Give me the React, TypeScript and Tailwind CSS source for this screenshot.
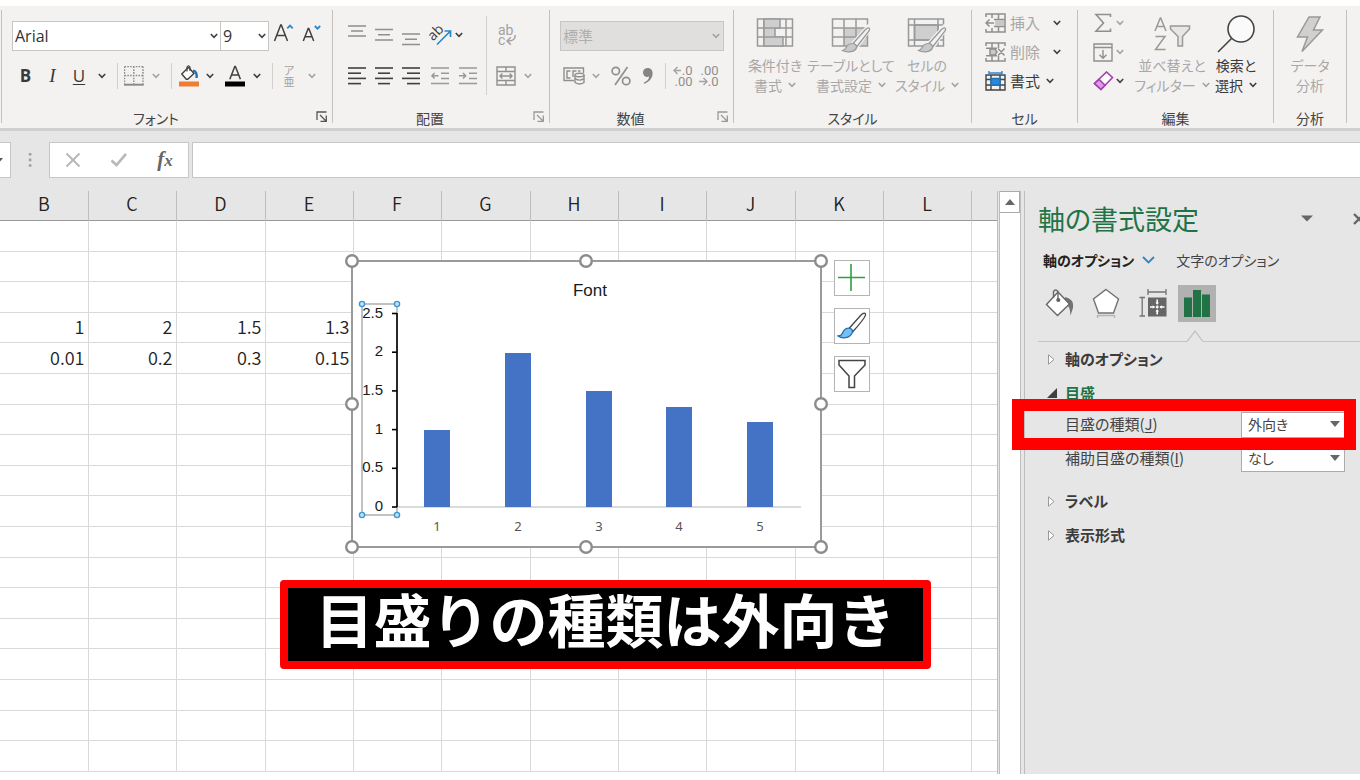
import type { ReactNode } from 'react';

const GRAY = '#a3a3a3';
const DARK = '#404040';

function Chevron({ color = DARK }: { color?: string }) {
  return (
    <svg width="8" height="6" viewBox="0 0 8 6" fill="none" stroke={color} strokeWidth="1.6">
      <path d="M0.8 1 L4 4.4 L7.2 1" />
    </svg>
  );
}

function Tool({ label, w, children }: { label: string; w: string; children: ReactNode }) {
  return (
    <button type="button" aria-label={label} className={`flex h-[30px] shrink-0 items-center justify-center ${w}`}>
      {children}
    </button>
  );
}

function Sep({ w = 'w-[10px]' }: { w?: string }) {
  return (
    <div className={`flex h-[26px] shrink-0 justify-center ${w}`}>
      <div className="w-px bg-[#d2d0ce]" />
    </div>
  );
}

function Launcher({ color }: { color: string }) {
  return (
    <button type="button" aria-label="詳細" className="absolute right-[4px] bottom-0">
      <svg width="12" height="12" viewBox="0 0 12 12" fill="none" stroke={color} strokeWidth="1.3">
        <path d="M1 9 V1 H10.5 M4 4 L9.5 9.5 M10.3 4.5 V10.3 H4.5" />
      </svg>
    </button>
  );
}

function Group({
  name,
  w,
  launcher,
  children,
}: {
  name: string;
  w: string;
  launcher?: string;
  children: ReactNode;
}) {
  return (
    <section
      aria-label={name}
      className={`relative flex h-[113px] shrink-0 flex-col justify-between border-r border-[#c4c2c0] ${w}`}
    >
      {children}
      <h2 className={`text-center text-sm leading-[10px] text-[#444] ${launcher ? 'pr-[22px]' : ''}`}>{name}</h2>
      {launcher && <Launcher color={launcher} />}
    </section>
  );
}

function Lines({ spans, color = DARK }: { spans: [number, number][]; color?: string }) {
  return (
    <svg width="18" height="18" viewBox="0 0 18 18" stroke={color} strokeWidth="1.6">
      {spans.map(([a, b], i) => (
        <path key={i} d={`M${a} ${1 + i * 5.2} H${b}`} />
      ))}
    </svg>
  );
}

function Brush({ x, y }: { x: number; y: number }) {
  return (
    <g transform={`translate(${x} ${y})`}>
      <path d="M26 0 L27.5 2 L14 21 L10 17.5 Z" fill="#f3f2f1" stroke="#f3f2f1" strokeWidth="4" />
      <path
        d="M26.5 0.8 C28 1.2 27.8 2.6 27 4 L15 19.5 L11 16.5 L23.5 2.5 C24.5 1.5 25.5 0.6 26.5 0.8 Z"
        fill="#f3f2f1"
        stroke="#999"
        strokeWidth="1.3"
      />
      <path
        d="M10.5 16.5 C13 16.5 15 18.5 14.5 20.5 C13.5 25 5 26 0.5 23.5 C4 22.5 3.5 21 5 18.8 C6.4 17 8.5 16.4 10.5 16.5 Z"
        fill="#c8c8c8"
        stroke="#999"
        strokeWidth="1.2"
      />
    </g>
  );
}

function Big({
  icon,
  top,
  bottom,
  w,
  dark,
  caret = true,
}: {
  icon: ReactNode;
  top: string;
  bottom: string;
  w: string;
  dark?: boolean;
  caret?: boolean;
}) {
  return (
    <button
      type="button"
      className={`flex shrink-0 flex-col items-center text-sm leading-5 whitespace-nowrap ${w} ${dark ? 'text-[#3b3a39]' : 'text-[#a8a8a8]'}`}
    >
      <span className="flex h-[42px] items-center justify-center">{icon}</span>
      <span>{top}</span>
      <span className="flex items-center gap-1.5">
        {bottom}
        {caret && <Chevron color={dark ? DARK : GRAY} />}
      </span>
    </button>
  );
}

function FontGroup() {
  return (
    <Group name="フォント" w="w-[331px]" launcher="#555">
      <div className="pt-[11px] pl-[10px]">
        <div className="flex h-[30px]">
          <div className="relative w-[209px]">
            <select
              aria-label="フォント名"
              className="h-[30px] w-full appearance-none border border-[#c8c6c4] bg-white pl-[2px] font-['Open_Sans'] text-base text-[#333] outline-none"
            >
              <option>Arial</option>
            </select>
            <span className="pointer-events-none absolute top-[12px] right-[3px]">
              <Chevron />
            </span>
          </div>
          <div className="relative -ml-px w-[49px]">
            <select
              aria-label="フォント サイズ"
              className="h-[30px] w-full appearance-none border border-[#c8c6c4] bg-white pl-[2px] font-['Open_Sans'] text-base text-[#333] outline-none"
            >
              <option>9</option>
            </select>
            <span className="pointer-events-none absolute top-[12px] right-[3px]">
              <Chevron />
            </span>
          </div>
          <button type="button" aria-label="フォント サイズの拡大" className="ml-[4px] h-[22px] w-[22px]">
            <svg width="22" height="22" viewBox="0 0 22 22" fill="none">
              <path d="M1.5 20 L7.7 4 H8.3 L14.5 20 M4 14.5 H12" stroke={DARK} strokeWidth="1.5" />
              <path d="M14.3 7.3 L17 4.6 L19.7 7.3" stroke="#2b88c8" strokeWidth="1.8" />
            </svg>
          </button>
          <button type="button" aria-label="フォント サイズの縮小" className="ml-[7px] h-[22px] w-[20px]">
            <svg width="20" height="22" viewBox="0 0 20 22" fill="none">
              <path d="M1.3 20 L6.2 7.5 H6.8 L11.7 20 M3.2 15.7 H9.8" stroke={DARK} strokeWidth="1.5" />
              <path d="M12.8 5 L15.5 7.7 L18.2 5" stroke="#2b88c8" strokeWidth="1.8" />
            </svg>
          </button>
        </div>
        <div className="mt-[10px] flex items-center font-['Open_Sans'] text-[17px] leading-5 text-[#3b3a39]">
          <Tool label="太字" w="w-[27px]">
            <b>B</b>
          </Tool>
          <Tool label="斜体" w="w-[27px]">
            <i className="font-['Liberation_Serif'] text-[19px]">I</i>
          </Tool>
          <Tool label="下線" w="w-[26px]">
            <u className="underline-offset-2">U</u>
          </Tool>
          <Tool label="下線の種類" w="w-[20px]">
            <Chevron />
          </Tool>
          <Sep />
          <Tool label="罫線" w="w-[24px]">
            <svg width="20" height="20" viewBox="0 0 20 20" fill="none" stroke="#8c8c8c">
              <path d="M0.5 0.5 H19 M0.5 0.5 V19 M19 0.5 V19 M0.5 9.5 H19 M9.8 0.5 V19" strokeWidth="1.4" strokeDasharray="1.6 1.2" />
              <path d="M0 18.7 H19.6" strokeWidth="2" />
            </svg>
          </Tool>
          <Tool label="罫線の種類" w="w-[20px]">
            <Chevron color={GRAY} />
          </Tool>
          <Sep />
          <Tool label="塗りつぶしの色" w="w-[25px]">
            <svg width="22" height="22" viewBox="0 0 22 22" fill="none">
              <path d="M3.8 9 L10.5 2.3 L16 8.5 L9.7 14.3 H8.3 Z" fill="#fff" stroke={DARK} strokeWidth="1.4" />
              <path d="M9 6.5 V2 Q10.5 -0.5 12 2 V6" stroke={DARK} strokeWidth="1.2" />
              <path d="M15 5.8 Q19.3 6 18.6 13" stroke="#1e74b8" strokeWidth="2.4" />
              <rect x="1" y="16.5" width="20" height="5" fill="#ed7d31" />
            </svg>
          </Tool>
          <Tool label="塗りつぶしの色の一覧" w="w-[18px]">
            <Chevron />
          </Tool>
          <Tool label="フォントの色" w="w-[32px]">
            <svg width="20" height="22" viewBox="0 0 20 22" fill="none">
              <path d="M4.8 14.3 L9.8 1.5 H10.4 L15.4 14.3 M6.7 10 H13.5" stroke={DARK} strokeWidth="1.5" />
              <rect y="16.5" width="20" height="5" fill="#000" />
            </svg>
          </Tool>
          <Tool label="フォントの色の一覧" w="w-[12px]">
            <Chevron />
          </Tool>
          <Sep w="w-[18px]" />
          <Tool label="ふりがな" w="w-[16px]">
            <span className="flex flex-col font-['Noto_Sans_CJK_JP'] text-[11px] leading-[11px] text-[#a3a3a3]">
              <span>ア</span>
              <span>亜</span>
            </span>
          </Tool>
          <Tool label="ふりがなの設定" w="w-[30px]">
            <Chevron color={GRAY} />
          </Tool>
        </div>
      </div>
    </Group>
  );
}

function AlignGroup() {
  return (
    <Group name="配置" w="w-[217px]" launcher="#999">
      <div className="flex pl-[10px]">
        <div className="w-[140px] pt-[10px]">
          <div className="flex h-[30px] items-center">
            <Tool label="上揃え" w="w-[27px]">
              <svg width="18" height="24" viewBox="0 0 18 24" stroke="#8f8f8f" strokeWidth="1.5">
                <path d="M0 3 H18 M3 8 H15 M0 13 H18" />
              </svg>
            </Tool>
            <Tool label="上下中央揃え" w="w-[27px]">
              <svg width="18" height="24" viewBox="0 0 18 24" stroke="#8f8f8f" strokeWidth="1.5">
                <path d="M0 6.5 H18 M3 11.7 H15 M0 17 H18" />
              </svg>
            </Tool>
            <Tool label="下揃え" w="w-[28px]">
              <svg width="18" height="24" viewBox="0 0 18 24" stroke="#8f8f8f" strokeWidth="1.5">
                <path d="M0 11 H18 M3 16.2 H15 M0 21.5 H18" />
              </svg>
            </Tool>
            <Tool label="方向" w="w-[30px]">
              <svg className="overflow-visible" width="24" height="24" viewBox="0 0 24 24" fill="none">
                <text
                  x="8"
                  y="14"
                  textAnchor="middle"
                  transform="rotate(-45 8 10)"
                  fontSize="14"
                  fontFamily="Open Sans"
                  fill={DARK}
                >
                  ab
                </text>
                <path d="M9 21.5 L22 8.5 M16.5 8 H22.5 V14" stroke="#2b88c8" strokeWidth="1.7" />
              </svg>
            </Tool>
            <Tool label="方向の一覧" w="w-[8px]">
              <Chevron />
            </Tool>
          </div>
          <div className="mt-[11px] flex h-[30px] items-center">
            <Tool label="左揃え" w="w-[27px]">
              <Lines spans={[[0, 18], [0, 13], [0, 18], [0, 13]]} />
            </Tool>
            <Tool label="中央揃え" w="w-[27px]">
              <Lines spans={[[0, 18], [3, 15], [0, 18], [3, 15]]} />
            </Tool>
            <Tool label="右揃え" w="w-[28px]">
              <Lines spans={[[0, 18], [5, 18], [0, 18], [5, 18]]} />
            </Tool>
            <Tool label="インデントを減らす" w="w-[30px]">
              <svg width="18" height="18" viewBox="0 0 18 18" stroke="#999" strokeWidth="1.5" fill="none">
                <path d="M0 1 H18 M10 6.2 H18 M10 11.4 H18 M0 16.6 H18 M7.5 8.8 H1 M3.6 6 L0.9 8.8 L3.6 11.6" />
              </svg>
            </Tool>
            <Tool label="インデントを増やす" w="w-[26px]">
              <svg width="18" height="18" viewBox="0 0 18 18" stroke="#999" strokeWidth="1.5" fill="none">
                <path d="M0 1 H18 M10 6.2 H18 M10 11.4 H18 M0 16.6 H18 M0 8.8 H6.5 M4 6 L6.7 8.8 L4 11.6" />
              </svg>
            </Tool>
          </div>
        </div>
        <div className="mt-[6px] ml-[3px] h-[79px] w-px bg-[#d2d0ce]" />
        <div className="pt-[10px] pl-[6px]">
          <Tool label="折り返して全体を表示する" w="w-[28px]">
            <svg className="overflow-visible" width="20" height="24" viewBox="0 0 20 24" fill="none">
              <text x="1" y="12" fontSize="14" fontFamily="Roboto" fill={GRAY}>
                ab
              </text>
              <text x="1" y="22" fontSize="14" fontFamily="Roboto" fill={GRAY}>
                c
              </text>
              <path d="M18 12 Q19 18 10.5 18 M13.8 14.3 L10 18 L13.8 21.6" stroke={GRAY} strokeWidth="1.5" />
            </svg>
          </Tool>
          <div className="mt-[11px] flex">
            <Tool label="セルを結合して中央揃え" w="w-[25px]">
              <svg width="20" height="20" viewBox="0 0 20 20" fill="none" stroke="#909090" strokeWidth="1.4">
                <path d="M1 1 H19 V19 H1 Z M1 5.5 H19 M1 14.5 H19 M10 1 V5.5 M10 14.5 V19 M4 10 H16 M6.4 7.6 L4 10 L6.4 12.4 M13.6 7.6 L16 10 L13.6 12.4" />
              </svg>
            </Tool>
            <Tool label="結合の種類" w="w-[20px]">
              <Chevron color={GRAY} />
            </Tool>
          </div>
        </div>
      </div>
    </Group>
  );
}

function NumberGroup() {
  return (
    <Group name="数値" w="w-[184px]" launcher="#999">
      <div className="pt-[11px] pl-[10px]">
        <div className="relative w-[164px]">
          <select
            aria-label="数値の書式"
            disabled
            className="h-[30px] w-full appearance-none border border-[#c8c6c4] bg-[#e1dfdd] pl-[2px] text-[15px] text-[#b0aeac] opacity-100"
          >
            <option>標準</option>
          </select>
          <span className="pointer-events-none absolute top-[12px] right-[4px]">
            <Chevron color={GRAY} />
          </span>
        </div>
        <div className="mt-[10px] flex items-center">
          <Tool label="通貨表示形式" w="w-[28px]">
            <svg width="22" height="20" viewBox="0 0 22 20" fill="none" stroke="#8f8f8f" strokeWidth="1.4">
              <path d="M11 14.5 H1 V2 H20.5 V7 M7.5 5 H4 V12 H7.5 M13.5 5 H10 V11 M15 5 H17.5" />
              <path d="M12 9 V16.5 Q16.5 19.5 21 16.5 V9" fill="#f3f2f1" />
              <ellipse cx="16.5" cy="9" rx="4.5" ry="1.8" fill="#f3f2f1" />
              <path d="M12 12.7 Q16.5 15.5 21 12.7" />
            </svg>
          </Tool>
          <Tool label="通貨の一覧" w="w-[16px]">
            <Chevron color={GRAY} />
          </Tool>
          <Tool label="パーセント スタイル" w="w-[33px]">
            <svg width="20" height="20" viewBox="0 0 20 20" fill="none" stroke="#8f8f8f" strokeWidth="1.7">
              <circle cx="4.8" cy="5" r="3.7" />
              <circle cx="15.2" cy="15" r="3.7" />
              <path d="M16.5 1 L4 19" />
            </svg>
          </Tool>
          <Tool label="桁区切りスタイル" w="w-[22px]">
            <svg width="12" height="18" viewBox="0 0 12 18" fill="#858585">
              <path d="M5.2 1 C8.6 0.8 10.6 3 10.6 6.5 C10.6 11.5 6.5 15.5 2 16.8 L1.7 15.8 C4.8 14.6 7 12.4 7.2 9.6 C3.8 11 1 8.6 1 5.4 C1 2.9 2.9 1.1 5.2 1 Z" />
            </svg>
          </Tool>
          <Sep w="w-[12px]" />
          <Tool label="小数点以下の表示桁数を増やす" w="w-[24px]">
            <svg className="overflow-visible" width="22" height="22" viewBox="0 0 22 22" fill="none">
              <path d="M9 5.5 H2 M5.5 2 L2 5.5 L5.5 9" stroke={GRAY} strokeWidth="1.4" />
              <text x="20.5" y="10" textAnchor="end" fontSize="13" fontFamily="Roboto" fill="#8f8f8f">
                .0
              </text>
              <text x="20.5" y="21" textAnchor="end" fontSize="13" fontFamily="Roboto" fill="#8f8f8f">
                .00
              </text>
            </svg>
          </Tool>
          <Tool label="小数点以下の表示桁数を減らす" w="w-[28px]">
            <svg className="overflow-visible" width="22" height="22" viewBox="0 0 22 22" fill="none">
              <text x="20.5" y="10" textAnchor="end" fontSize="13" fontFamily="Roboto" fill="#8f8f8f">
                .00
              </text>
              <path d="M1 16.5 H9 M5.5 13 L9 16.5 L5.5 20" stroke={GRAY} strokeWidth="1.4" />
              <text x="20.5" y="21" textAnchor="end" fontSize="13" fontFamily="Roboto" fill="#8f8f8f">
                .0
              </text>
            </svg>
          </Tool>
        </div>
      </div>
    </Group>
  );
}

function StyleGroup() {
  return (
    <Group name="スタイル" w="w-[238px]">
      <div className="flex pt-[3px] pl-[3px]">
        <Big
          w="w-[76px]"
          top="条件付き"
          bottom="書式"
          icon={
            <svg width="38" height="36" viewBox="0 0 38 36" fill="none" stroke="#999" strokeWidth="1.5">
              <path d="M1.5 3 H36.5 V30 H1.5 Z M1.5 12 H36.5 M1.5 21 H36.5 M8 3 V30 M30 3 V30" />
              <path d="M8 3 H24 V12 H8 Z M8 12 H19 V21 H8 Z M8 21 H27 V30 H8 Z" fill="#cfcfcf" />
            </svg>
          }
        />
        <Big
          w="w-[76px]"
          top="テーブルとして"
          bottom="書式設定"
          icon={
            <svg width="40" height="38" viewBox="0 0 40 38" fill="none" stroke="#999" strokeWidth="1.5">
              <path d="M13 13 H36 V31 H13 Z" fill="#cfcfcf" stroke="none" />
              <path d="M1.5 4 H36.5 V31 H1.5 Z M1.5 13 H36.5 M1.5 22 H36.5 M13 4 V31 M25 4 V31" />
              <Brush x={11} y={12} />
            </svg>
          }
        />
        <Big
          w="w-[76px]"
          top="セルの"
          bottom="スタイル"
          icon={
            <svg width="40" height="38" viewBox="0 0 40 38" fill="none" stroke="#999" strokeWidth="1.5">
              <path d="M7.5 10 H31 V25 H7.5 Z" fill="#cfcfcf" />
              <path d="M1.5 4 H36.5 V31 H1.5 Z M1.5 10 H36.5 M1.5 25 H36.5 M7.5 4 V31 M31 4 V31" />
              <Brush x={11} y={12} />
            </svg>
          }
        />
      </div>
    </Group>
  );
}

function CellRow({ icon, text, dark }: { icon: ReactNode; text: string; dark?: boolean }) {
  return (
    <button
      type="button"
      className={`flex h-[29px] items-center gap-[4px] pb-[3px] text-[15px] ${dark ? 'text-[#3b3a39]' : 'text-[#a8a8a8]'}`}
    >
      {icon}
      <span className={dark ? 'mr-[2px]' : 'mr-[9px]'}>{text}</span>
      <Chevron />
    </button>
  );
}

function CellGroup() {
  return (
    <Group name="セル" w="w-[106px]">
      <div className="flex flex-col items-start pl-[13px]">
        <CellRow
          text="挿入"
          icon={
            <svg width="21" height="20" viewBox="0 0 21 20" fill="none" stroke="#8f8f8f" strokeWidth="1.5">
              <path d="M1 4 V1 H20 V19 H1 V16 M7 1 V5 M13.5 1 V19 M7 15 V19 M9 6.5 H20 M9 13.5 H20 M1 10 H9 M4.5 6.5 L1 10 L4.5 13.5" />
              <path d="M10 7 H19 V13 H10 Z" fill="#c8c8c8" stroke="none" />
            </svg>
          }
        />
        <CellRow
          text="削除"
          icon={
            <svg width="21" height="20" viewBox="0 0 21 20" fill="none" stroke="#8f8f8f" strokeWidth="1.5">
              <path d="M1 4 V1 H20 V4 M1 16 V19 H20 V16 M7 1 V6 M13.5 1 V6 M7 14 V19 M13.5 14 V19 M1 6.3 H12 M1 13.7 H12 M13 6.5 L19.5 13.5 M19.5 6.5 L13 13.5" />
              <path d="M5 7 H10 L12 10 L10 13 H5 Z" fill="#c8c8c8" />
            </svg>
          }
        />
        <CellRow
          dark
          text="書式"
          icon={
            <svg width="21" height="20" viewBox="0 0 21 20" fill="none" stroke="#444" strokeWidth="1.4">
              <path d="M1 4 H20 V19 H1 Z M1 8.5 H20 M1 14 H20 M6 4 V19 M15 4 V19" />
              <path d="M6 7.5 H15 V14 H6 Z" fill="#2b88d8" stroke="#1e74b8" />
              <path d="M4 0 V4 M17 0 V4 M4 2 H17" stroke="#2b88d8" />
            </svg>
          }
        />
      </div>
    </Group>
  );
}

function EditGroup() {
  return (
    <Group name="編集" w="w-[196px]">
      <div className="flex">
        <div className="w-[56px] pl-[12px]">
          <div className="flex h-[29px] items-center pb-[3px]">
            <Tool label="合計" w="w-[26px]">
              <svg width="18" height="20" viewBox="0 0 18 20" fill="none" stroke="#8f8f8f" strokeWidth="1.6">
                <path d="M16.5 4 V1.5 H2 L9.5 10 L2 18.2 H16.5 V15.5" />
              </svg>
            </Tool>
            <Chevron color={GRAY} />
          </div>
          <div className="flex h-[29px] items-center pb-[3px]">
            <Tool label="フィル" w="w-[26px]">
              <svg width="20" height="19" viewBox="0 0 20 19" fill="none" stroke="#8f8f8f" strokeWidth="1.4">
                <path d="M1 1 H19 V18 H1 Z M1 4.5 H19 M10 7 V15 M6.5 11.7 L10 15.2 L13.5 11.7" />
              </svg>
            </Tool>
            <Chevron color={GRAY} />
          </div>
          <div className="flex h-[29px] items-center pb-[3px]">
            <Tool label="クリア" w="w-[26px]">
              <svg width="21" height="20" viewBox="0 0 21 20" fill="none" stroke="#a13fb0" strokeWidth="1.6">
                <path d="M1.5 12.5 L13.5 1 L19.5 6.5 L8 18.5 Z" fill="#fff" />
                <path d="M1.5 12.5 L6 8.3 L12 14.3 L8 18.5 Z" fill="#dc9be3" />
              </svg>
            </Tool>
            <Chevron />
          </div>
        </div>
        <div className="flex pt-[3px]">
          <Big
            w="w-[76px]"
            top="並べ替えと"
            bottom="フィルター"
            icon={
              <svg width="38" height="38" viewBox="0 0 38 38" fill="none" stroke="#999" strokeWidth="1.5">
                <path d="M2 16 L7.3 3 H7.7 L13 16 M4 11.5 H11 M2.5 21.5 H12 L2.5 34.5 H12.5" />
                <path d="M17.5 11 H36.5 V14 L29.5 21.5 V31 H25 V21.5 L17.5 14 Z" fill="#e6e6e6" />
              </svg>
            }
          />
          <Big
            w="w-[52px]"
            dark
            top="検索と"
            bottom="選択"
            icon={
              <svg width="38" height="40" viewBox="0 0 38 40" fill="none" stroke="#444" strokeWidth="1.6">
                <circle cx="24" cy="15" r="13" fill="#fafafa" />
                <path d="M14.5 24.5 L1 38" />
              </svg>
            }
          />
        </div>
      </div>
    </Group>
  );
}

function AnalysisGroup() {
  return (
    <Group name="分析" w="w-[73px]">
      <div className="pt-[3px]">
        <Big
          w="w-full"
          top="データ"
          bottom="分析"
          caret={false}
          icon={
            <svg width="28" height="38" viewBox="0 0 28 38" fill="#d0d0d0" stroke="#999" strokeWidth="1.5">
              <path d="M13 2 H24 L17.5 15 H26.5 L6 36.5 L11.5 22 H1.5 Z" />
            </svg>
          }
        />
      </div>
    </Group>
  );
}

function FormulaBar() {
  return (
    <div className="flex h-[63px] items-center border-t-[3px] border-b-2 border-t-[#d0d0d0] border-b-[#e6e6e6] bg-[#e6e6e6]">
      <div className="flex h-[36px] w-[11px] items-center border border-l-0 border-[#c6c6c6] bg-white">
        <svg width="3" height="4" viewBox="0 0 3 4" fill="#555">
          <path d="M0 0 H3 L0 3.5 Z" />
        </svg>
      </div>
      <div className="flex w-[38px] justify-center">
        <svg width="4" height="16" viewBox="0 0 4 16" fill="#a0a0a0">
          <path d="M0.8 1 H3.4 V3.6 H0.8 Z M0.8 6.6 H3.4 V9.2 H0.8 Z M0.8 12.2 H3.4 V14.8 H0.8 Z" />
        </svg>
      </div>
      <div className="flex h-[36px] w-[140px] items-center border border-[#c6c6c6] bg-white">
        <Tool label="キャンセル" w="w-[46px]">
          <svg width="16" height="16" viewBox="0 0 16 16" stroke="#b8b8b8" strokeWidth="2">
            <path d="M1.5 1.5 L14.5 14.5 M14.5 1.5 L1.5 14.5" />
          </svg>
        </Tool>
        <Tool label="入力" w="w-[46px]">
          <svg width="18" height="16" viewBox="0 0 18 16" stroke="#b8b8b8" strokeWidth="2.6" fill="none">
            <path d="M1.5 8.5 L6.5 13.2 L16 1.8" />
          </svg>
        </Tool>
        <Tool label="関数の挿入" w="w-[46px]">
          <i className="font-['Liberation_Serif'] text-[21px] leading-6 font-bold text-[#666]">
            f<span className="text-[17px]">x</span>
          </i>
        </Tool>
      </div>
      <input aria-label="数式バー" className="ml-[3px] h-[36px] min-w-0 flex-1 border border-r-0 border-[#c6c6c6] bg-white px-2 outline-none" />
    </div>
  );
}

const COLUMNS = ['B', 'C', 'D', 'E', 'F', 'G', 'H', 'I', 'J', 'K', 'L'];
const DATA: Record<number, string[]> = {
  3: ['1', '2', '1.5', '1.3'],
  4: ['0.01', '0.2', '0.3', '0.15'],
};

const BARS = [1, 2, 1.5, 1.3, 1.1];

function Chart() {
  const handles: [number, number][] = [
    [8, 8], [242, 8], [477, 8],
    [8, 151], [477, 151],
    [8, 294], [242, 294], [477, 294],
  ];
  return (
    <svg width="486" height="302" viewBox="0 0 486 302" role="img" aria-label="Font">
      <rect x="8" y="8" width="469" height="286" fill="#fff" stroke="#9a9a9a" strokeWidth="2" />
      <text x="246" y="43" textAnchor="middle" fontSize="17" fontFamily="Liberation Sans" fill="#1a1a1a">
        Font
      </text>
      <path d="M53 254 H457" stroke="#cfcfcf" strokeWidth="1.3" />
      {BARS.map((v, i) => {
        const x = 80 + Math.round(i * 80.8);
        const h = Math.round(v * 77.2);
        return (
          <g key={i}>
            <rect x={x} y={254 - h} width="26" height={h} fill="#4472c4" />
            <text x={x + 13} y="278" textAnchor="middle" fontSize="13" fontFamily="Noto Sans" fill="#555">
              {i + 1}
            </text>
          </g>
        );
      })}
      <rect x="18" y="51" width="35" height="211" fill="none" stroke="#9a9a9a" strokeWidth="1.2" />
      <path d="M53 60 V254" stroke="#000" strokeWidth="1.6" />
      {['0', '0.5', '1', '1.5', '2', '2.5'].map((t, i) => {
        const y = 254 - i * 38.7;
        return (
          <g key={t}>
            <path d={`M48 ${y} H53`} stroke="#000" strokeWidth="1.6" />
            <text x="39" y={y + 4} textAnchor="end" fontSize="15" fontFamily="Liberation Sans" fill="#1a1a1a">
              {t}
            </text>
          </g>
        );
      })}
      {[[18, 51], [53, 51], [18, 262], [53, 262]].map(([x, y]) => (
        <circle key={`${x}-${y}`} cx={x} cy={y} r="2.6" fill="#bfe0f7" stroke="#3f96d2" strokeWidth="1.4" />
      ))}
      {handles.map(([x, y]) => (
        <circle key={`${x}-${y}`} cx={x} cy={y} r="5.8" fill="#fff" stroke="#8c8c8c" strokeWidth="2.4" />
      ))}
    </svg>
  );
}

function ChartButton({ label, children }: { label: string; children: ReactNode }) {
  return (
    <button
      type="button"
      aria-label={label}
      className="flex h-[36px] w-[36px] items-center justify-center border border-[#b4b4b4] bg-white"
    >
      {children}
    </button>
  );
}

function Sheet() {
  return (
    <div className="relative min-w-0 flex-1 overflow-hidden border-r border-[#bdbdbd] bg-white">
      <table className="w-full table-fixed border-collapse font-['Noto_Sans_CJK_JP'] text-lg leading-6 font-[350] text-[#222]">
        <colgroup>
          {COLUMNS.map((c) => (
            <col key={c} className={c === 'D' || c === 'G' || c === 'J' ? 'w-[89px]' : 'w-[88px]'} />
          ))}
          <col />
        </colgroup>
        <thead>
          <tr className="h-[29px] border-b border-[#999] bg-[#e6e6e6]">
            {COLUMNS.map((c) => (
              <th key={c} scope="col" className="border-r border-[#bdbdbd] p-0 pb-[4px] font-[350]">
                {c}
              </th>
            ))}
            <td />
          </tr>
        </thead>
        <tbody>
          {Array.from({ length: 18 }, (_, r) => (
            <tr key={r} className={`border-b border-[#d9d9d9] ${r % 5 === 1 || r % 5 === 3 ? 'h-[30px]' : 'h-[31px]'}`}>
              {COLUMNS.map((c, i) => (
                <td key={c} className="border-r border-[#d9d9d9] pt-0 pr-[3px] pb-[2px] pl-0 text-right">
                  {DATA[r]?.[i]}
                </td>
              ))}
              <td />
            </tr>
          ))}
        </tbody>
      </table>
      <div className="absolute top-[62px] left-[344px]">
        <Chart />
      </div>
      <div className="absolute top-[69px] left-[834px] flex flex-col gap-[12px]">
        <ChartButton label="グラフ要素">
          <svg width="28" height="28" viewBox="0 0 28 28" stroke="#2f9e44" strokeWidth="1.6">
            <path d="M13 0 V27 M0 13.5 H27" />
          </svg>
        </ChartButton>
        <ChartButton label="グラフ スタイル">
          <svg width="30" height="28" viewBox="0 0 30 28" fill="none" stroke="#444" strokeWidth="1.3">
            <path d="M12 16.5 L24 3 C26 1 29.5 0 28.3 3.6 C27.5 6 24 10.5 16 19.5 Z" fill="#fff" />
            <path
              d="M11.5 16.2 C14.5 16 16.5 18.5 15 21.3 C12.5 26.5 5 27 1 24 C4.5 23.8 4.8 22.5 6 20 C7.2 17.5 9 16.3 11.5 16.2 Z"
              fill="#76c0f5"
              stroke="#1c6fb0"
            />
          </svg>
        </ChartButton>
        <ChartButton label="グラフ フィルター">
          <svg width="28" height="30" viewBox="0 0 28 30" fill="#fff" stroke="#444" strokeWidth="1.5">
            <path d="M1 1.5 H27 V6 L16.5 17 V28.5 H11 V17 L1 6 Z" />
          </svg>
        </ChartButton>
      </div>
      <p className="absolute top-[389px] left-[280px] flex h-[89px] w-[651px] items-center justify-center rounded-[4px] border-8 border-[#fe0000] bg-black pb-[13px] font-['Noto_Sans_CJK_JP'] text-[58px] leading-none font-bold whitespace-nowrap text-white [font-feature-settings:normal]">
        目盛りの種類は外向き
      </p>
    </div>
  );
}

function Section({ title, open, children }: { title: string; open?: boolean; children?: ReactNode }) {
  return (
    <div>
      <button
        type="button"
        aria-expanded={!!open}
        className={`flex h-[34px] items-center text-[15px] font-bold ${open ? 'text-[#217346]' : 'text-[#3b3b3b]'}`}
      >
        <span className="flex w-[27px] justify-center">
          {open ? (
            <svg width="10" height="10" viewBox="0 0 10 10" fill="#404040">
              <path d="M10 0 V10 H0 Z" />
            </svg>
          ) : (
            <svg width="7" height="11" viewBox="0 0 7 11" fill="#fff" stroke="#999">
              <path d="M0.5 0.8 L6 5.5 L0.5 10.2 Z" />
            </svg>
          )}
        </span>
        {title}
      </button>
      {children}
    </div>
  );
}

function Field({ id, label, hotkey, value }: { id: string; label: string; hotkey: string; value: string }) {
  return (
    <div className="flex h-[34px] items-center justify-between pr-[15px] pl-[27px] text-[15px] text-[#444]">
      <label htmlFor={id} className="pb-[2px]">
        {label}(<u className="underline-offset-2">{hotkey}</u>)
      </label>
      <div className="relative w-[104px]">
        <select
          id={id}
          className="h-[26px] w-full appearance-none border border-[#ababab] bg-white pb-[2px] pl-[6px] text-sm text-[#444] outline-none"
        >
          <option>{value}</option>
        </select>
        <svg className="pointer-events-none absolute top-[9px] right-[5px]" width="10" height="6" viewBox="0 0 10 6" fill="#666">
          <path d="M0 0 H10 L5 6 Z" />
        </svg>
      </div>
    </div>
  );
}

function Pane() {
  return (
    <aside className="flex w-[340px] shrink-0 border-l border-[#bdbdbd] bg-[#e6e6e6] pl-[3px]">
      <div className="flex min-w-0 flex-1 flex-col border-l border-[#bdbdbd] pl-[13px]">
        <div className="flex h-[55px] items-center justify-between">
          <h1 className="text-[27px] leading-8 text-[#217346]">軸の書式設定</h1>
          <div className="flex items-center">
            <svg width="12" height="7" viewBox="0 0 12 7" fill="#666">
              <path d="M0 0.5 H12 L6 6.5 Z" />
            </svg>
            <button type="button" aria-label="閉じる" className="ml-[40px] w-[7px] overflow-hidden">
              <svg width="12" height="12" viewBox="0 0 12 12" stroke="#666" strokeWidth="2.4">
                <path d="M1 1 L11 11 M11 1 L1 11" />
              </svg>
            </button>
          </div>
        </div>
        <div className="flex h-[28px] items-center pl-[5px] text-sm">
          <button type="button" className="font-bold text-[#222]">
            軸のオプション
          </button>
          <svg className="ml-[8px]" width="13" height="8" viewBox="0 0 13 8" fill="none" stroke="#2b88c8" strokeWidth="1.8">
            <path d="M1 1 L6.5 6.5 L12 1" />
          </svg>
          <button type="button" className="ml-[21px] text-[#444]">
            文字のオプション
          </button>
        </div>
        <div className="flex h-[58px] items-center">
          <Tool label="塗りつぶしと線" w="w-[44px]">
            <svg width="30" height="30" viewBox="0 0 30 30" fill="none" stroke="#666" strokeWidth="1.4">
              <path d="M20 9 Q29.5 11 28 20 L25.5 27.5 Q25.5 19 20 13.5 Z" fill="#737373" stroke="none" />
              <path d="M13 4 L24.5 16 L12.5 27.5 L1.5 16.5 Z" fill="#fff" />
              <path d="M8.5 10 V3.5 Q10.5 0.5 13 3.5 V11.5" />
              <circle cx="13.3" cy="12" r="1.4" fill="#555" />
            </svg>
          </Tool>
          <Tool label="効果" w="w-[48px]">
            <svg width="28" height="30" viewBox="0 0 28 30" fill="none" stroke="#737373" strokeWidth="1.4">
              <path d="M14 1.5 L26.5 11 L21.5 25 H6.5 L1.5 11 Z" fill="#fff" />
              <path d="M5.5 27.5 H22.5 M5.5 27 V30 M22.5 27 V30" stroke="#b5b5b5" />
            </svg>
          </Tool>
          <Tool label="サイズとプロパティ" w="w-[46px]">
            <svg width="28" height="28" viewBox="0 0 28 28" fill="none" stroke="#737373" strokeWidth="1.3">
              <path d="M9 0 V6 M27 0 V6 M9 3 H27 M0.5 8.5 H6 M0.5 27 H6 M3.2 8.5 V27" />
              <rect x="9" y="8.5" width="18.5" height="19" fill="#666" stroke="none" />
              <path
                d="M18.2 10.5 V15 M18.2 21 V25.5 M11 18 H15.3 M21.2 18 H25.5 M16.8 18 H19.6 M18.2 16.6 V19.4"
                stroke="#fff"
                strokeWidth="1.6"
              />
              <path
                d="M16.5 13.5 H20 L18.2 15.8 Z M16.5 22.5 H20 L18.2 20.2 Z M13.7 16.3 V19.7 L16 18 Z M22.8 16.3 V19.7 L20.4 18 Z"
                fill="#fff"
                stroke="none"
              />
            </svg>
          </Tool>
          <button type="button" aria-label="軸のオプション" className="ml-[2px] flex h-[37px] w-[38px] items-center justify-center bg-[#b1b1b1]">
            <svg width="26" height="28" viewBox="0 0 26 28" fill="#217346">
              <path d="M0 8.5 H8 V28 H0 Z M9 1 H17 V28 H9 Z M18 5.5 H26 V28 H18 Z" />
            </svg>
          </button>
        </div>
        <div className="flex h-[10px] items-end">
          <div className="h-px w-[149px] bg-[#c4c4c4]" />
          <svg width="16" height="12" viewBox="0 0 16 12" fill="none" stroke="#c4c4c4" strokeWidth="1.3">
            <path d="M0 11.5 L8 1 L16 11.5" />
          </svg>
          <div className="h-px flex-1 bg-[#c4c4c4]" />
        </div>
        <Section title="軸のオプション" />
        <Section title="目盛" open>
          <div className="-mt-[2px]">
            <div className="relative">
              <Field id="major" label="目盛の種類" hotkey="J" value="外向き" />
              <div className="pointer-events-none absolute top-[-9px] right-[4px] z-10 h-[51px] w-[344px] border-[12px] border-[#fe0000]" />
            </div>
            <Field id="minor" label="補助目盛の種類" hotkey="I" value="なし" />
          </div>
        </Section>
        <div className="mt-[8px]">
          <Section title="ラベル" />
          <Section title="表示形式" />
        </div>
      </div>
    </aside>
  );
}

export default function App() {
  return (
    <div className="flex min-h-screen flex-col overflow-hidden bg-white pt-[6px] pb-[6px] font-['Noto_Sans_CJK_JP',sans-serif] [font-feature-settings:'palt']">
      <header className="flex h-[122px] overflow-hidden bg-[#f3f2f1] pt-[4px]">
        <div className="h-[113px] w-[2px] shrink-0 border-r border-[#c4c2c0]" />
        <FontGroup />
        <AlignGroup />
        <NumberGroup />
        <StyleGroup />
        <CellGroup />
        <EditGroup />
        <AnalysisGroup />
      </header>
      <FormulaBar />
      <main className="flex flex-1 bg-[#e6e6e6]">
        <Sheet />
        <div className="flex w-[22px] shrink-0 flex-col pl-[1px]">
          <div className="flex flex-1 flex-col border-l border-[#bdbdbd] bg-white">
            <button type="button" aria-label="上へスクロール" className="flex h-[22px] items-center justify-center border border-l-0 border-[#ababab] bg-white">
              <svg width="10" height="6" viewBox="0 0 10 6" fill="#666">
                <path d="M0 6 H10 L5 0 Z" />
              </svg>
            </button>
          </div>
        </div>
        <Pane />
      </main>
    </div>
  );
}
